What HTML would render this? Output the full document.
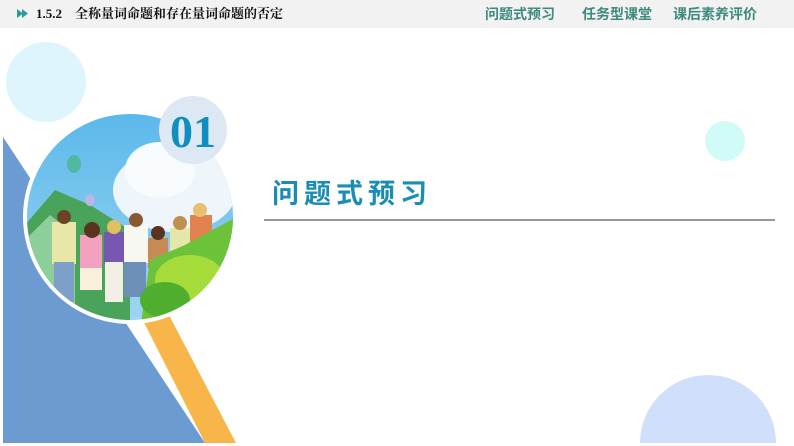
<!DOCTYPE html>
<html style="overflow:hidden;width:794px;height:446px"><head><meta charset="utf-8"><style>
html,body{margin:0;padding:0;background:#fff;}
body{width:794px;height:446px;overflow:hidden;position:relative;font-family:"Liberation Sans","Noto Sans CJK SC",sans-serif;}
svg{display:block}
.hdr{position:absolute;left:0;top:0;width:794px;height:28px;background:#f2f2f2;}
.t{position:absolute;white-space:nowrap;line-height:1.2;}
</style></head><body>
<div class="hdr"></div>
<svg width="794" height="446" style="position:absolute;left:0;top:0">
  <defs>
    <clipPath id="cc"><circle cx="130" cy="217" r="103"/></clipPath>
    <linearGradient id="sky" x1="0" y1="0" x2="0" y2="1">
      <stop offset="0" stop-color="#5ab8ea"/><stop offset="1" stop-color="#9fd6f3"/>
    </linearGradient>
  </defs>
  <polygon points="17,9 23,13.5 17,18" fill="#2e9a9a"/>
  <polygon points="22,9 28,13.5 22,18" fill="#2e9a9a"/>
  <circle cx="46" cy="82" r="40" fill="#dff5fd"/>
  <circle cx="725" cy="141" r="20" fill="#d0fbf7"/>
  <circle cx="708" cy="443" r="68" fill="#d0e0fa"/>
  <rect x="0" y="443" width="794" height="3" fill="#fff"/>
  <polygon points="3,137 205,443 3,443" fill="#6b9bd1"/>
  <polygon points="120,275 148,275 236,443 205,443" fill="#f7b54a"/>
  <circle cx="130" cy="217" r="107" fill="#fff"/>
  <g clip-path="url(#cc)">
    <rect x="20" y="110" width="220" height="215" fill="url(#sky)"/>
    <ellipse cx="175" cy="190" rx="62" ry="42" fill="#eef6fb"/>
    <ellipse cx="160" cy="170" rx="35" ry="28" fill="#f7fbfd"/>
    <polygon points="25,225 55,190 90,205 130,230 130,330 25,330" fill="#4aa35a"/>
    <polygon points="25,240 50,215 75,235 75,330 25,330" fill="#8ccf9a"/>
    <ellipse cx="74" cy="164" rx="7" ry="9" fill="#4fb8a0"/>
    <ellipse cx="90" cy="200" rx="5" ry="6" fill="#b9b7e6"/>
    <rect x="52" y="222" width="24" height="42" fill="#e9e7a8"/>
    <rect x="54" y="262" width="20" height="40" fill="#7da0c8"/>
    <rect x="80" y="235" width="22" height="35" fill="#f2a2c0"/>
    <rect x="80" y="268" width="22" height="22" fill="#f6f1d8"/>
    <rect x="104" y="232" width="20" height="32" fill="#7857b0"/>
    <rect x="105" y="262" width="18" height="40" fill="#f1efe6"/>
    <rect x="124" y="225" width="24" height="38" fill="#f8f8f2"/>
    <rect x="124" y="262" width="22" height="35" fill="#6e90b8"/>
    <rect x="148" y="238" width="20" height="30" fill="#c88a55"/>
    <rect x="170" y="228" width="20" height="32" fill="#e4e7a8"/>
    <rect x="190" y="215" width="22" height="32" fill="#e0834f"/>
    <circle cx="64" cy="217" r="7" fill="#6b4428"/>
    <circle cx="92" cy="230" r="8" fill="#5a3420"/>
    <circle cx="114" cy="227" r="7" fill="#e0c060"/>
    <circle cx="136" cy="220" r="7" fill="#8a5830"/>
    <circle cx="158" cy="233" r="7" fill="#5a3420"/>
    <circle cx="180" cy="223" r="7" fill="#c09050"/>
    <circle cx="200" cy="210" r="7" fill="#e8c070"/>
    <polygon points="140,330 150,260 185,245 240,215 240,330" fill="#6cc23a"/>
    <ellipse cx="190" cy="280" rx="35" ry="25" fill="#a6dc3a"/>
    <ellipse cx="165" cy="300" rx="25" ry="18" fill="#4fae2e"/>
  </g>
  <circle cx="130" cy="217" r="105" fill="none" stroke="#fff" stroke-width="3"/>
  <circle cx="193" cy="130" r="34" fill="#dde8f4"/>
  <text x="193" y="147" text-anchor="middle" font-family="Liberation Serif,serif" font-weight="bold" font-size="46" fill="#0f8fbf">01</text>
  <line x1="264" y1="220" x2="775" y2="220" stroke="#777" stroke-width="1.5"/>
</svg>
<div class="t" style="left:36px;top:6px;font-size:13px;font-weight:bold;font-family:'Liberation Serif','Noto Serif CJK SC',serif;color:#111">1.5.2&nbsp;&nbsp;&nbsp;&nbsp;全称量词命题和存在量词命题的否定</div>
<div class="t" style="left:485px;top:6px;font-size:14px;font-weight:bold;color:#3f8a7e">问题式预习</div>
<div class="t" style="left:582px;top:6px;font-size:14px;font-weight:bold;color:#3f8a7e">任务型课堂</div>
<div class="t" style="left:673px;top:6px;font-size:14px;font-weight:bold;color:#3f8a7e">课后素养评价</div>
<div class="t" style="left:272px;top:178px;font-size:27px;font-weight:bold;color:#1a8db5;letter-spacing:5px">问题式预习</div>
</body></html>
